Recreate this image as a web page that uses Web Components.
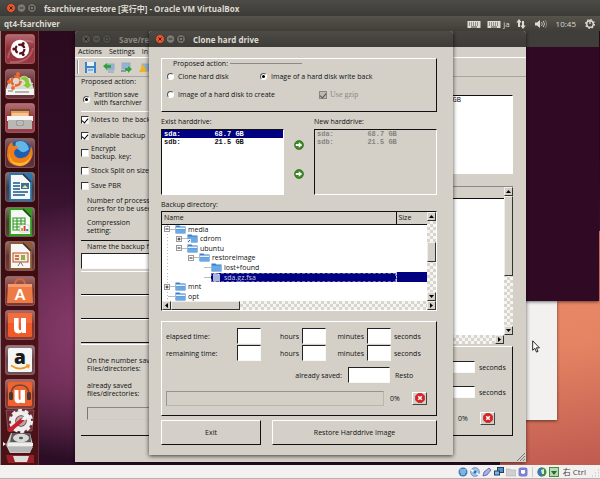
<!DOCTYPE html>
<html lang="en">
<head>
<meta charset="utf-8">
<title>Clone hard drive</title>
<style>
:root{--ui:"Open Sans","Noto Sans CJK JP",sans-serif;--face:#d4d0c8}
html,body{margin:0;height:100%;background:#300a24;overflow:hidden}
body{font:7px/9px var(--ui);color:#111}
</style>
</head>
<body>
<vm-screen></vm-screen>
<script>
const ui = `*{box-sizing:border-box}button,input{font:inherit;color:inherit;margin:0;padding:0;border-radius:0}
.in{background:#fff;border:1px solid;border-color:#222 #f8f8f6 #f8f8f6 #222;min-width:0;width:100%;outline:0;display:block}
.frame{border:1px solid;border-color:#fff #111 #111 #fff}`;
function define(name, html){
  customElements.define(name, class extends HTMLElement{
    connectedCallback(){
      if(this.shadowRoot) return;
      const root=this.attachShadow({mode:'open'});
      const t=document.createElement('template');
      t.innerHTML='<style>'+ui+'</style>'+(typeof html==='function'?html(this):html);
      root.append(t.content.cloneNode(true));
    }
  });
}

const tile = (c,body)=>`<svg viewBox="0 0 30 30"><defs><linearGradient id="g" x2="0" y2="1"><stop offset="0" stop-color="#fff" stop-opacity=".34"/><stop offset=".5" stop-color="#fff" stop-opacity=".06"/><stop offset="1" stop-color="#fff" stop-opacity=".12"/></linearGradient></defs><rect x=".5" y=".5" width="29" height="29" rx="2.5" fill="${c}"/><rect x=".5" y=".5" width="29" height="29" rx="2.5" fill="url(#g)" stroke="#c9a0a0" stroke-opacity=".4"/>${body}</svg>`;
const doc = (c,inner)=>`<path d="M5 2h13l8 8v18H5z" fill="#f7f7f5" stroke="${c}" stroke-width="1.8"/><path d="M18 1l9 10V3q0-2-2-2z" fill="${c}"/><path d="M18 2l8 8" stroke="#333" stroke-width="1.5"/>${inner}`;
const appIcons = {
  dash: tile('#8c1f2b','<path d="M3 24Q7 2 28 8M5 28Q24 30 28 14" stroke="#d79a9a" stroke-width="2" fill="none" opacity=".4"/><circle cx="15" cy="15" r="9.2" fill="#fff"/><circle cx="15" cy="15" r="4.4" fill="none" stroke="#5a0f1a" stroke-width="2.2" stroke-dasharray="7.6 1.6"/><g fill="#5a0f1a"><circle cx="8.8" cy="15" r="1.5"/><circle cx="18.2" cy="9.6" r="1.5"/><circle cx="18.2" cy="20.4" r="1.5"/></g>'),
  installer: tile('#5b1820','<path d="M5 9h20l4 11v6H1v-6z" fill="#d9d8d4"/><path d="M1 20h28v6H1z" fill="#f3f3f1"/><path d="M3 22h5M10 23h14" stroke="#777" stroke-width="1.2"/><circle cx="11" cy="12" r="4.500" fill="none" stroke="#ed6a2b" stroke-width="2.6" stroke-dasharray="8 1.400"/><circle cx="4" cy="13" r="2" fill="#ed6a2b"/><circle cx="13" cy="5" r="2" fill="#ed6a2b"/><circle cx="8" cy="19" r="2" fill="#ed6a2b"/><path d="M16 8q8-3 9 7l3-1-5 6-6-4 3-1q0-5-5-4z" fill="#8cc63f" stroke="#e6f4c8" stroke-width=".7"/>'),
  files: tile('#8e2634','<path d="M5 6h20v9H5z" fill="#6c5137"/><path d="M6 8h18v8H6z" fill="#e89a55"/><path d="M7 10h16v5H7z" fill="#f5c493"/><path d="M2 13h26v5H2z" fill="#f7f6f4"/><path d="M3 17h24v9H3z" fill="#b9b8b4"/><rect x="12" y="18" width="6" height="4" fill="#f5f5f5" stroke="#777" stroke-width=".8"/><path d="M13 20h4" stroke="#777"/>'),
  firefox: tile('#4b1a26','<circle cx="15" cy="15" r="12.5" fill="#1b5fae"/><path d="M11 4q10-4 13 7-5 6-10 1-5-3-3-8z" fill="#63b6e8"/><path d="M3 9q1-3 4-5l1 4q4-1 6 2-5 1-5 5 1 6 8 5 8-1 9-12 4 8-1 15-5 6-12 5Q3 27 2 18q0-5 1-9z" fill="#ef7d1a"/><path d="M4 15q1 10 11 10 8 0 11-8-1 10-11 11Q4 27 4 15z" fill="#fbb82c"/>'),
  writer: tile('#37303f', doc('#2a76ad','<path d="M8 11h7M8 14h7M8 17h7M8 20h15M8 23h12" stroke="#1a5a8e" stroke-width="1.6"/><path d="M16 11h8v6h-8z" fill="#3c6f96"/><path d="M17 16l3-3 3 3z" fill="#e6e3a0"/>')),
  calc: tile('#3a3020', doc('#35a01f','<path d="M8 11h12v12H8zM8 14h12M8 17h12M8 20h12M12 11v12M16 11v12" fill="none" stroke="#2f9a22" stroke-width="1.1"/><rect x="15" y="18" width="9" height="7" fill="#fff" stroke="#aaa" stroke-width=".5"/><path d="M17 24v-3" stroke="#e0a030" stroke-width="2"/><path d="M19.6 24v-5" stroke="#d04a28" stroke-width="2"/><path d="M22.2 24v-2" stroke="#3a78b8" stroke-width="2"/>')),
  impress: tile('#5a2420', doc('#8f5a3a','<rect x="8" y="12" width="15" height="9" fill="#fbe7da" stroke="#b2501f"/><path d="M10 15h4M10 18h4" stroke="#b2501f" stroke-width="1.6"/><rect x="16" y="14" width="4" height="5" fill="#8fae58"/><path d="M13 25l2.5-4 2.5 4" stroke="#777" fill="none"/>')),
  software: tile('#6a2320','<path d="M10 9q0-6 5-6t5 6" fill="none" stroke="#d9643c" stroke-width="2"/><path d="M3 8h24l1 19H2z" fill="#ee7a45"/><path d="M3 8h24v3H3z" fill="#f49a6c"/><text x="15" y="24" font-family="Lato" font-weight="900" font-size="15" text-anchor="middle" fill="#fff">A</text>'),
  one: tile('#7a241c','<rect x="3" y="3" width="24" height="24" rx="1.5" fill="#f05a28"/><path d="M3 3h24v10H3z" fill="#f5804f" opacity=".5"/><path d="M9 8h4.6v10q0 2.2 2.4 2.2V8H21v15h-4v-1q-1.200 1.400-3.400 1.400Q9 23.400 9 18.500z" fill="#fff"/>'),
  amazon: tile('#5c3a3f','<rect x="3" y="3" width="24" height="24" rx="1.500" fill="#f6f6f4"/><text x="15" y="19" font-family="Open Sans" font-weight="800" font-size="19" text-anchor="middle" fill="#1b1b1b">a</text><path d="M6 20.500q9 6 17 .5M21 20l3 .200-.8 3" fill="none" stroke="#f09a20" stroke-width="1.600"/>'),
  music: tile('#7a241c','<rect x="3" y="3" width="24" height="24" rx="1.500" fill="#f0622f"/><path d="M6 16q0-10 9-10t9 10" fill="none" stroke="#6a4a3c" stroke-width="1.600"/><rect x="4" y="13" width="4" height="8" rx="1.500" fill="#3f3833"/><rect x="22" y="13" width="4" height="8" rx="1.500" fill="#3f3833"/><path d="M9.500 11h4v8q0 2 2 2V11h4.500v13h-3.800v-1q-1 1.300-3.200 1.200-3.500-.2-3.500-4.200z" fill="#fff"/>')
};
define('launch-tile', el=>`<style>:host{display:block}button{display:block;width:30px;height:30px;border:0;background:none;overflow:visible}svg{display:block;width:30px;height:30px;overflow:visible}</style><button aria-label="${el.getAttribute('app')}">${appIcons[el.getAttribute('app')]}</button>`);

define('app-launcher', `<style>
:host{display:flex;flex-direction:column;padding:3px 4px 0;border-right:1px solid #6a3038;border-left:1px solid #888;background:linear-gradient(#4a1014,#360c10 25%,#380c10 50%,#50121a 75%,#481216)}
nav{display:flex;flex-direction:column;justify-content:space-between;height:375px;flex:none}
.fold{display:block;width:33px;height:54px;margin-left:-2px}</style>
<nav>${Object.keys(appIcons).map(k=>`<launch-tile app="${k}"></launch-tile>`).join('')}</nav>
<svg class="fold" viewBox="0 0 33 54"><path d="M3 1h28l-2 21H5z" fill="#6b2a30" stroke="#b08080" stroke-width=".5"/><circle cx="18" cy="12" r="8" fill="none" stroke="#eee" stroke-width="4.500"/><circle cx="18" cy="12" r="10.800" fill="none" stroke="#eee" stroke-width="2.500" stroke-dasharray="4 2.790"/><circle cx="18" cy="12" r="5" fill="#b5a8a8"/><path d="M7 21L19 11" stroke="#c8202c" stroke-width="4" stroke-linecap="round"/><path d="M18 11l4-5 4 0-3 5z" fill="#f4f4f4"/>
<path d="M8 24h19l3 12-3 8H7l-4-8z" fill="#c9c9c7"/><path d="M9 24h18l1 9H7z" fill="#5a5a5a"/><ellipse cx="18" cy="29" rx="8" ry="4.200" fill="#d8d8d8"/><ellipse cx="18" cy="29" rx="2" ry="1.200" fill="#555"/><path d="M5 34h25v3H5z" fill="#eee"/><path d="M5 38h25l-3 5H8z" fill="#b5b5b3"/><path d="M3 46h28v8H5z" fill="#9a1d28"/><path d="M10 47h16l-2 6H12z" fill="#dcdcda"/><path d="M0 33l3 2-3 2z" fill="#eee"/></svg>`);

const dots = off => `<svg viewBox="0 0 32 10" aria-hidden="true"><circle cx="5" cy="5" r="4.400" fill="${off?'#55534e':'#e9582c'}" stroke="#2d2c29" stroke-width=".5"/><path d="M3.400 3.400l3.200 3.200M6.600 3.400L3.400 6.600" stroke="#3a1a10"/><circle cx="15.500" cy="5" r="4.200" fill="${off?'#55534e':'#7c7a72'}" stroke="#2d2c29" stroke-width=".5"/><path d="M13.500 5h4" stroke="#35342f"/><circle cx="26" cy="5" r="4.200" fill="${off?'#55534e':'#7c7a72'}" stroke="#2d2c29" stroke-width=".5"/><rect x="24.300" y="3.300" width="3.400" height="3.400" fill="none" stroke="#35342f" stroke-width=".9"/></svg>`;
define('title-bar', el=>`<style>:host{display:flex;align-items:center;gap:6px;height:16px;padding-left:6px;background:linear-gradient(#4d4b46,#3c3b37);color:#dfdbd2;font:bold 8px/15px var(--ui);white-space:nowrap;overflow:hidden}
:host([off]){color:#8a877f;background:linear-gradient(#45443f,#3c3b37)}svg{width:32px;height:10px;flex:none}</style>${dots(el.hasAttribute('off'))}<span><slot></slot></span>`);

const keyb='<svg width="14" viewBox="0 0 14 12"><rect x=".5" y="3" width="13" height="7" fill="#dfdbd2"/><path d="M2 5h10M2 7h10" stroke="#45443f" stroke-dasharray="1 1"/><path d="M4 9h6" stroke="#45443f"/></svg>';
define('menu-panel', `<style>:host{display:flex;align-items:center;height:15px;padding:0 5px 0 4px;background:linear-gradient(#55534b,#3f3e39);color:#dfdbd2;font:8px/15px var(--ui)}
b{flex:1;font-weight:bold}svg{height:12px;display:block}.k{display:flex;align-items:center;gap:2px;margin-right:6px}.m{margin-right:9px}</style>
<b>qt4-fsarchiver</b><span class="k">${keyb}</span><span class="k">${keyb}ja</span>
<svg class="m" width="10" viewBox="0 0 10 12"><path d="M3 1L.3 4.500H2V9h2V4.500h1.700zM7 11l2.700-3.500H8V3H6v4.500H4.300z" fill="#dfdbd2"/></svg>
<svg class="m" width="12" viewBox="0 0 12 12"><path d="M0 4.500h2L5 2v8L2 7.500H0z" fill="#dfdbd2"/><path d="M6.500 4q1.500 2 0 4M8.300 3q2.400 3 0 6" fill="none" stroke="#c5c1b8"/><path d="M10 2q3.200 4 0 8" fill="none" stroke="#85827a"/></svg>
<span class="m">10:45</span>
<svg width="10" viewBox="0 0 10 12"><circle cx="5" cy="6" r="3.300" fill="none" stroke="#dfdbd2" stroke-width="1.500"/><circle cx="5" cy="6" r="4.400" fill="none" stroke="#dfdbd2" stroke-width="1.200" stroke-dasharray="1.600 1.850"/><path d="M5 1.500V6" stroke="#dfdbd2" stroke-width="1.300"/></svg>`);

define('radio-opt', el=>`<style>:host{display:block}label{display:flex;align-items:center;gap:4px;white-space:nowrap}
input{appearance:none;width:7px;height:7px;border-radius:50%;background:#fff;border:1px solid;border-color:#555 #fff #fff #555;flex:none;display:grid;place-items:center}
input:checked::after{content:"";width:3px;height:3px;border-radius:50%;background:#000}</style>
<label><input type="radio" name="o" ${el.hasAttribute('on')?'checked':''}><span><slot></slot></span></label>`);
define('check-opt', el=>`<style>:host{display:block}label{display:flex;align-items:center;gap:2px;white-space:nowrap}:host([off]) label{color:#8a8880;gap:3px;font-family:"Liberation Serif",serif;font-size:8px}
input{appearance:none;width:8px;height:8px;background:#fff;border:1px solid;border-color:#333 #eee #eee #333;flex:none;display:grid;place-items:center}
input:disabled{background:#bcb9b1;border-color:#888}
input:checked::after{content:"";width:3px;height:5px;border:solid #000;border-width:0 1px 1px 0;transform:rotate(40deg)}
input:disabled::after{border-color:#555}</style>
<label><input type="checkbox" ${el.hasAttribute('on')?'checked':''} ${el.hasAttribute('off')?'disabled':''}><span><slot></slot></span></label>`);

define('drive-list', el=>`<style>:host{display:block;flex:1}h4{margin:0 0 1px;font:inherit;line-height:12px}
ul{margin:0;padding:0;height:66px;list-style:none;background:#fff;border:1px solid;border-color:#111 #fff #fff #111;font:bold 7px/8px "Liberation Mono",monospace;white-space:pre}
li{padding-left:2px;height:8px}li.sel{background:#000080;color:#fff}
:host([off]) ul{background:var(--face);color:#85837c}</style>
<h4><slot></slot></h4><ul><li class="${el.hasAttribute('off')?'':'sel'}">sda:        68.7 GB</li><li>sdb:        21.5 GB</li></ul>`);

define('scroll-bar', el=>`<style>:host{display:flex;background:repeating-conic-gradient(#d8d5ce 0 25%,#f6f5f2 0 50%) 0 0/6px 6px}
:host([v]){flex-direction:column;width:9px}:host([h]){height:9px}
button{width:9px;height:9px;flex:none;background:var(--face);border:1px solid;border-color:#eee #333 #333 #eee;display:grid;place-items:center}
svg{width:5px;height:5px;display:block}i{background:var(--face);border:1px solid;border-color:#eee #333 #333 #eee;flex:none}</style>
<button aria-label="Back"><svg viewBox="0 0 5 5"><path d="${el.hasAttribute('v')?'M0 4h5L2.500 1z':'M4 0v5L1 2.500z'}"/></svg></button>
<span style="flex:${el.getAttribute('before')} 0 0"></span><i style="${el.hasAttribute('v')?'height':'width'}:${el.getAttribute('thumb')}"></i><span style="flex:${el.getAttribute('after')} 0 0"></span>
<button aria-label="Forward"><svg viewBox="0 0 5 5"><path d="${el.hasAttribute('v')?'M0 1h5L2.500 4z':'M1 0v5l3-2.500z'}"/></svg></button>`);

const folder=(k)=> k==='file' ? `<svg class="ic" viewBox="0 0 11 9"><path d="M2 0h5l2 2v7H2z" fill="#aab6dc"/><path d="M7 0v2h2" fill="#e8ecfa"/></svg>`
 : `<svg class="ic" viewBox="0 0 11 9"><path d="M.5 .5h4l1 1h5v7H.5z" fill="#3f7fc4"/><path d="M.8 ${k==='open'?4.200:2.500}h9.400V8H.8z" fill="#6aa9e4"/>${k==='open'?'<path d="M1 2.500h9v1.500H1z" fill="#e8f3fd"/>':''}${k==='link'?'<path d="M0 5h4v4H0z" fill="#eef"/><path d="M1 8l2-2" stroke="#333" stroke-width=".8"/>':''}</svg>`;
const nodes=[[0,'-','open','media'],[1,'+','link','cdrom'],[1,'-','open','ubuntu'],[2,'-','open','restoreimage'],[3,'','dir','lost+found'],[3,'','file','sda.gz.fsa'],[0,'+','open','mnt'],[0,'','open','opt']];
define('dir-tree', `<style>:host{display:grid;grid-template-columns:1fr 9px;grid-template-rows:89px 9px;height:100px;background:#fff;border:1px solid;border-color:#111 #fff #fff #111}
table{width:100%;height:89px;border-collapse:collapse;table-layout:fixed}
th{height:12px;font-weight:normal;text-align:left;padding:0 2px;background:var(--face);border-bottom:1px solid #111;line-height:10px}
th+th{width:31px;border-left:1px solid #111}td{padding:0}
.r{display:flex;align-items:center;height:9px;line-height:9px;background:repeating-linear-gradient(#bbb 0 1px,transparent 1px 3px) 5px 0/1px 100% no-repeat}
.sel .n,.sel td+td{background:#000080;color:#c9cbe8}.sel td+td{border-left:1px dashed #c9cbe8}
.n{display:flex;align-items:center;gap:2px;flex:1;height:9px}.n.f{outline:1px dashed #6a6ab8;outline-offset:-1px}
.ic{width:11px;height:9px}.x{width:12px;flex:none;display:flex;align-items:center;height:9px;background:linear-gradient(#bbb,#bbb) 5px 4px/7px 1px no-repeat}
.x svg{width:6px;height:6px;margin-left:1px}scroll-bar[h]{grid-column:1/3}</style>
<table><thead><tr><th>Name</th><th>Size</th></tr></thead><tbody>${nodes.map(([d,x,k,t])=>`<tr class="${k==='file'?'sel':''}"><td><div class="r" style="padding-left:${d*12+1}px"><span class="x">${x?`<svg viewBox="0 0 6 6"><rect x=".5" y=".5" width="5" height="5" fill="#fff" stroke="#999"/><path d="M1.500 3h3${x==='+'?'M3 1.500v3':''}" stroke="#222"/></svg>`:''}</span><span class="n ${k==='file'?'f':''}">${folder(k)}<span>${t}</span></span></div></td><td></td></tr>`).join('')}</tbody></table>
<scroll-bar v before="22" thumb="20px" after="31"></scroll-bar><scroll-bar h before="0" thumb="69px" after="1"></scroll-bar>`);

define('stop-button', `<style>:host{display:block}button{width:15px;height:13px;background:var(--face);border:1px solid;border-color:#fff #444 #444 #fff}svg{display:block;margin:auto}</style><button aria-label="Cancel"><svg viewBox="0 0 12 10" width="12" height="10"><path d="M4 .5h4L10.500 3v4L8 9.500H4L1.500 7V3z" fill="#dc2222" stroke="#a01010" stroke-width=".5"/><path d="M4.200 3.200l3.600 3.600M7.800 3.200L4.200 6.800" stroke="#fff" stroke-width="1.500"/></svg></button>`);
define('push-button', `<style>:host{display:block}button{width:100%;height:25px;background:var(--face);border:1px solid;border-color:#fff #111 #111 #fff}</style><button><slot></slot></button>`);
define('progress-line', `<style>:host{display:flex;align-items:center}div{flex:1;height:15px;border:1px solid;border-color:#96948c #b9b6ae #b9b6ae #96948c}span{padding-left:6px;width:28px}</style><div role="progressbar" aria-valuenow="0" aria-label="progress"></div><span>0%</span><stop-button></stop-button>`);

define('clone-dialog', `<style>
:host{display:block;background:var(--face);box-shadow:0 1px 4px #000b;border-radius:3px 3px 0 0;overflow:hidden}
main{padding:11px 16px 10px 12px}
fieldset{margin:0;min-width:0;padding:1px 5px;height:54px;display:grid;grid-template-columns:93px 1fr;grid-template-rows:12px 15px 1fr}
.lg{grid-column:1/3;display:flex;align-items:center;gap:2px;padding-left:6px;margin-top:-6px}.lg i{width:72px;height:1px;background:#8c8a83}
fieldset check-opt{padding-left:59px}.r3{grid-row:3;margin-top:3px}
.drives{display:flex;margin-top:4px}.arrows{width:30px;display:flex;flex-direction:column;gap:19px;padding:24px 0 0 10px}
.arrows button{width:10px;height:10px;border:0;background:none;display:block}.arrows svg{display:block;width:10px;height:10px}
h4{margin:4px 0 1px;font:inherit;line-height:11px}
.times{margin-top:10px;padding:6px 5px 9px 4px}
.g{display:grid;grid-template-columns:71px 24px 41px 24px 41px 24px 1fr;grid-auto-rows:16px;row-gap:1px;align-items:center}
.g label{text-align:right;padding-right:3px}.g label.l{text-align:left}.g span{padding-left:3px}.g input{height:16px}
.s{display:grid;grid-template-columns:182px 42px 1fr;align-items:center;margin:6px 0 8px}.s input{height:16px}.s label{text-align:right;padding-right:6px}.s span{padding-left:5px}
progress-line{padding-right:4px}
.b{display:grid;grid-template-columns:100px 1fr;gap:11px;margin-top:4px}
</style><title-bar>Clone hard drive</title-bar><main>
<fieldset class="frame"><div class="lg">Proposed action:<i></i></div>
<radio-opt>Clone hard disk</radio-opt><radio-opt on>Image of a hard disk write back</radio-opt>
<radio-opt class="r3">Image of a hard disk to create</radio-opt><check-opt class="r3" on off>Use gzip</check-opt></fieldset>
<div class="drives"><drive-list>Exist harddrive:</drive-list><div class="arrows">${'<button aria-label="Copy"><svg viewBox="0 0 10 10"><circle cx="5" cy="5" r="4.500" fill="#3c8a24" stroke="#22600f" stroke-width=".6"/><path d="M1.800 4h3V2.200L8.300 5 4.800 7.800V6h-3z" fill="#fff"/></svg></button>'.repeat(2)}</div><drive-list off>New harddrive:</drive-list></div>
<h4>Backup directory:</h4><dir-tree></dir-tree>
<section class="times frame"><div class="g">
<label class="l" for="eh">elapsed time:</label><input class="in" id="eh"><label for="em">hours</label><input class="in" id="em"><label for="es">minutes</label><input class="in" id="es"><span>seconds</span>
<label class="l" for="rh">remaining time:</label><input class="in" id="rh"><label for="rm">hours</label><input class="in" id="rm"><label for="rs">minutes</label><input class="in" id="rs"><span>seconds</span></div>
<div class="s"><label for="sv">already saved:</label><input class="in" id="sv"><span>Resto</span></div><progress-line></progress-line></section>
<div class="b"><push-button>Exit</push-button><push-button>Restore Harddrive Image</push-button></div></main>`);

const tool = {
 save:'<path d="M1 1h11v11H1z" fill="#3d83c8"/><path d="M3 1h7v4H3z" fill="#e8f0f8"/><path d="M3 7h7v5H3z" fill="#cfe0f0"/><path d="M4 9h5" stroke="#3d83c8"/>',
 back:'<rect x="5" y="3" width="7" height="6" fill="#8fb4d8" stroke="#9ab"/><path d="M1 5l4-3v2h4v3H5v2z" fill="#2fa33a"/><path d="M6 11h6" stroke="#89a"/>',
 fwd:'<rect x="2" y="2" width="8" height="6" fill="#8fb4d8" stroke="#9ab"/><path d="M12 8l-4-3v2H5v3h3v2z" fill="#2fa33a"/><path d="M1 10h5" stroke="#89a" stroke-width="2"/>',
 warn:'<rect x="4" y="3" width="8" height="7" fill="#8fb4d8" stroke="#9ab"/><path d="M5 3L1 11h8z" fill="#f2b21e"/>'
};
define('main-window', `<style>
:host{display:flex;flex-direction:column;background:var(--face);box-shadow:0 1px 4px #0009;border-radius:3px 3px 0 0;overflow:hidden}
.menu{display:flex;gap:7px;height:11px;line-height:10px;padding-left:3px;border-bottom:1px solid #fff;flex:none}
.tools{display:flex;gap:5px;align-items:center;height:19px;border-bottom:1px solid #a8a59d;padding-left:2px;flex:none}
.tools button{border:0;background:none;width:13px;height:13px}.tools svg{width:13px;height:13px;display:block}.grip{width:2px;height:14px;border-left:1px solid #888;border-right:1px solid #fff}
.cols{flex:1;display:grid;grid-template-columns:1fr 1fr;padding:0 13px 26px 6px}
.a,.c{display:flex;flex-direction:column}.a{white-space:nowrap;line-height:8px}.a>*{flex:none;display:flex;align-items:center}
.t{padding-left:6px}.box{border-top:1px solid #fff;border-bottom:1px solid #111;height:24px}
.a>.last{flex:1 1 0;display:block;border-top:1px solid #fff;border-bottom:1px solid #111;padding:12px 6px 0}
.last p{margin:0 0 9px}.last div{height:13px;border:1px solid;border-color:#888 #aaa #ccc #777}
.gb{height:79px;margin-top:18px;background:#fff;border:1px solid;border-color:#111 #fff #fff #111;font:7px/9px "Liberation Mono",monospace;text-align:right;padding-right:51px}
.sv{margin-top:12px;height:158px;display:grid;grid-template-columns:1fr 9px;grid-template-rows:1fr 9px;border-top:1px solid #888;background:#fff}
.sv>div{border-top:11px solid var(--face)}.sv>div i{display:block;height:1px;background:#111}.sv>span{background:var(--face)}
.g{margin-top:2px;flex:1;padding:14px 5px 0 0}.row{display:grid;grid-template-columns:1fr 24px 32px;align-items:center;margin-bottom:13px}.row input{height:12px;grid-column:2}.row label{grid-column:3;padding-left:4px}
.g progress-line{padding-right:12px;margin-top:8px}
.rz{position:absolute;right:1px;bottom:1px;width:8px;height:8px}
</style><title-bar off>Save/re</title-bar>
<div class="menu"><span>Actions</span><span>Settings</span><span>In</span></div>
<div class="tools"><i class="grip"></i>${Object.entries(tool).map(([k,v])=>`<button aria-label="${k}"><svg viewBox="0 0 13 13">${v}</svg></button>`).join('')}</div>
<div class="cols"><div class="a">
<div style="height:10px">Proposed action:</div>
<radio-opt on style="height:25px;border-bottom:1px solid #fff;padding-left:2px">Partition save<br>with fsarchiver</radio-opt>
<check-opt on style="height:15px">Notes to &nbsp;the back</check-opt><check-opt on style="height:17px">available backup</check-opt>
<check-opt style="height:17px">Encrypt<br>backup. key:</check-opt><check-opt style="height:19px">Stock Split on size</check-opt><check-opt style="height:12px">Save PBR</check-opt>
<div class="t" style="height:25px">Number of process<br>cores for to be used</div><div class="t" style="height:20px;margin-bottom:3px">Compression<br>setting:</div>
<label class="t" for="nm" style="height:13px;border-top:1px solid #111">Name the backup f</label>
<input class="in" id="nm" style="height:16px;margin-bottom:2px"><div class="box"></div><div class="box"></div><div class="box" style="margin-bottom:1px"></div>
<div class="last"><p>On the number sav<br>Files/directories:</p><p>already saved<br>files/directories:</p><div role="progressbar" aria-label="files"></div></div></div>
<div class="c"><div class="gb">GB</div><div class="sv"><div><i></i></div><scroll-bar v before="0" thumb="80px" after="1"></scroll-bar><scroll-bar h before="0" thumb="40px" after="1"></scroll-bar><span></span></div>
<section class="g frame"><div class="row"><input class="in" id="s1"><label for="s1">seconds</label></div><div class="row"><input class="in" id="s2"><label for="s2">seconds</label></div><progress-line></progress-line></section></div></div>
<svg class="rz" viewBox="0 0 8 8"><path d="M0 8l8-8M3 8l5-5M6 8l2-2" stroke="#777"/></svg>`);

define('status-tray', `<style>:host{display:flex;align-items:center;justify-content:flex-end;gap:2px;height:14px;background:#f2f1ef;border-bottom:1px solid #b5b3ae;font:8px/13px var(--ui);color:#444}
svg{width:10px;height:10px}i{width:1px;height:10px;background:#ccc;margin:0 2px}span{margin:0 2px}</style>
<svg viewBox="0 0 10 10"><circle cx="5" cy="5" r="4.500" fill="#3e7fc2"/><path d="M2 3h6M2 5h6M3 7h4" stroke="#cfe4f7"/></svg>
<svg viewBox="0 0 10 10"><circle cx="5" cy="5" r="4.500" fill="#9cc0e4" stroke="#5585b8" stroke-width=".6"/><path d="M5 5L1 3M5 5l4 3" stroke="#fff" stroke-width="1.500"/><circle cx="5" cy="5" r="1.500" fill="#3767a8"/></svg>
<svg viewBox="0 0 10 10"><path d="M1 9l1-4 5-4 2 2-4 5z" fill="#a8b0e8" stroke="#5058a8" stroke-width=".8"/></svg>
<svg viewBox="0 0 10 10"><rect x="3.500" y=".5" width="6" height="5" fill="#4d8fd6" stroke="#245"/><rect x=".5" y="4" width="5" height="4" fill="#7db2ea" stroke="#245"/></svg>
<svg viewBox="0 0 10 10"><path d="M0 2h4l1 1h5v6H0z" fill="#cfcfcf" stroke="#b0b0b0" stroke-width=".6"/></svg>
<svg viewBox="0 0 10 10"><rect x=".5" y=".5" width="9" height="9" rx="2" fill="#7d7fd0"/><path d="M3 3v3q2 2 4 0V3z" fill="#fff"/></svg><i></i>
<svg viewBox="0 0 10 10"><circle cx="5" cy="5" r="4.500" fill="#3b8f3d"/><path d="M5 .5A4.500 4.500 0 0 0 5 9.500z" fill="#3e74b8"/><path d="M4 3l3-1v5H5z" fill="#d8f0d0"/></svg>
<svg viewBox="0 0 10 10"><rect x=".5" y=".5" width="9" height="9" fill="#b9d8b4" stroke="#478a4c"/><path d="M2 4h6L5 8z" fill="#246b2e"/></svg>
<span>右 Ctrl</span><svg viewBox="0 0 10 10"><path d="M8 3h1M8 6h1M5 6h1M8 9h1M5 9h1M2 9h1" stroke="#bbb"/></svg>`);

define('vm-screen', `<style>
:host{display:grid;grid-template-rows:16px 15px 1fr 14px;height:100vh;overflow:hidden}
.desk{display:flex;position:relative;overflow:hidden;background:radial-gradient(ellipse 130px 130px at 85px 300px,#8a3c6a,#8a3c6a00),linear-gradient(#2c0a1e,#2e0c26 30%,#4a1c40 55%,#5a2448 80%,#2b0e25 98%)}
.desk>*{flex:none}
app-launcher{width:39px}
.wall{position:absolute;right:0;width:100px;top:200px;bottom:0;background:linear-gradient(170deg,#ee8c69,#e58463 50%,#bf5a50)}
.term{position:absolute;top:0;right:1px;width:160px;height:270px;background:linear-gradient(#3f3e3a 0 16px,#300a24 16px);box-shadow:0 1px 3px #0008}
.note{position:absolute;right:43px;width:100px;top:270px;height:119px;background:#f2f1f0;box-shadow:0 1px 3px #0008}
main-window{position:absolute;left:75px;right:74px;top:0;bottom:3px}
clone-dialog{position:absolute;left:149px;right:147px;top:0}
.ptr{position:absolute;right:60px;top:309px;width:8px;height:13px}
</style>
<title-bar>fsarchiver-restore [実行中] - Oracle VM VirtualBox</title-bar><menu-panel></menu-panel>
<div class="desk"><app-launcher></app-launcher><div class="wall"></div><div class="note"></div><div class="term"></div>
<main-window></main-window><clone-dialog></clone-dialog>
<svg class="ptr" viewBox="0 0 8 13"><path d="M.7.8v9.500l2.200-2 1.600 3.800 1.500-.7-1.600-3.600h3z" fill="#fff" stroke="#111" stroke-width=".9"/></svg></div>
<status-tray></status-tray>`);
</script>
</body>
</html>
